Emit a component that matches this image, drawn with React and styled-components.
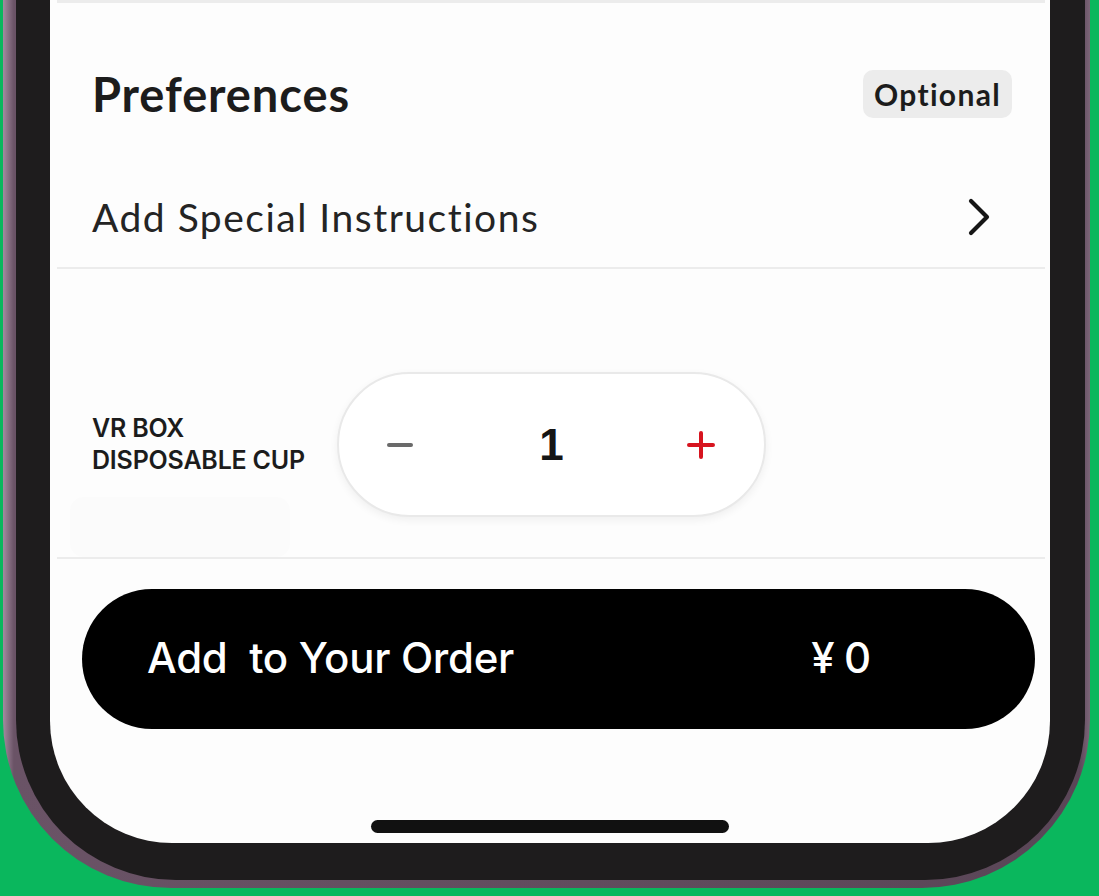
import styled, { createGlobalStyle } from 'styled-components'

const Global = createGlobalStyle`
  html, body { margin: 0; padding: 0; }
  body { background: #0ab75d; }
`

const Page = styled.div`
  width: 1099px;
  height: 896px;
  overflow: hidden;
  padding-left: 3px;
  box-sizing: border-box;
`

const Bezel = styled.div`
  width: 1087px;
  height: 888px;
  box-sizing: border-box;
  padding: 0 5px 8px 13px;
  border-radius: 0 0 168px 168px;
  background: linear-gradient(90deg, #a48ba0 0%, #6a5366 1%, #5a4657 99%, #7d6679 100%);
`

const Frame = styled.div`
  height: 100%;
  box-sizing: border-box;
  padding: 0 35px 37px 34px;
  background: #1e1c1d;
  border-radius: 0 0 160px 160px;
`

const Screen = styled.div`
  height: 100%;
  background: #fdfdfd;
  border-radius: 0 0 122px 122px;
  display: flex;
  flex-direction: column;
  overflow: hidden;
`

const Rule = styled.div`
  height: ${p => p.$h || 2}px;
  margin: ${p => p.$top || 0}px 5px 0 7px;
  background: #ececec;
`

const Header = styled.div`
  margin-top: 67px;
  height: 47px;
  padding: 0 38px 0 42px;
  display: flex;
  align-items: center;
  justify-content: space-between;
`

const Title = styled.h2`
  margin: 0;
  font-family: Lato, "Noto Sans", sans-serif;
  font-weight: 700;
  font-size: 47px;
  color: #1c1c1c;
  letter-spacing: 0.9px;
`

const Tag = styled.span`
  height: 48px;
  width: 149px;
  box-sizing: border-box;
  display: flex;
  align-items: center;
  justify-content: center;
  border-radius: 10px;
  background: #ececec;
  font-family: Lato, "Noto Sans", sans-serif;
  font-weight: 700;
  font-size: 30px;
  color: #1c1c1c;
  letter-spacing: 1.3px;
`

const LinkRow = styled.div`
  margin-top: 74px;
  height: 52px;
  padding: 0 56px 0 42px;
  display: flex;
  align-items: center;
  justify-content: space-between;
  font-family: Lato, "Noto Sans", sans-serif;
  font-size: 39px;
  color: #242424;
  letter-spacing: 1.5px;
`

const ItemRow = styled.div`
  margin-top: 103px;
  height: 145px;
  padding-left: 42px;
  display: flex;
  align-items: center;
`

const ItemName = styled.div`
  width: 245px;
  font-family: Inter, "Noto Sans", sans-serif;
  font-weight: 600;
  font-size: 25px;
  line-height: 32px;
  letter-spacing: -0.2px;
  color: #1c1c1c;
  margin-top: -2px;
`

const Stepper = styled.div`
  width: 429px;
  height: 145px;
  box-sizing: border-box;
  border-radius: 73px;
  border: 2px solid #e9e9e9;
  box-shadow: 0 3px 8px rgba(0, 0, 0, 0.06);
  background: #fff;
  display: flex;
  align-items: center;
  justify-content: space-between;
  padding: 0 48px 0 46px;
`

const StepBtn = styled.span`
  width: 30px;
  height: 30px;
  display: flex;
  align-items: center;
  justify-content: center;
`

const Count = styled.span`
  font-family: "Liberation Sans", Arial, sans-serif;
  font-weight: 700;
  font-size: 44px;
  color: #151515;
  margin-left: 2px;
`

const Ghost = styled.div`
  margin: -20px 0 0 20px;
  width: 220px;
  height: 60px;
  border-radius: 14px;
  background: #fbfbfb;
`

const OrderButton = styled.button`
  margin: 30px 15px 0 32px;
  height: 140px;
  border: none;
  border-radius: 70px;
  background: #000;
  color: #fff;
  display: flex;
  align-items: center;
  justify-content: space-between;
  padding: 0 165px 4px 65px;
  font-family: Inter, "Noto Sans", sans-serif;
  font-weight: 500;
  font-size: 42px;
  letter-spacing: -0.3px;
  white-space: pre;
  cursor: pointer;
`

const Price = styled.span`
  letter-spacing: -1px;
`

const HomeBar = styled.div`
  margin: 91px auto 0;
  width: 358px;
  height: 13px;
  border-radius: 7px;
  background: #111;
`

export default function App() {
  return (
    <Page>
      <Global />
      <Bezel>
        <Frame>
          <Screen>
            <Rule $h={3} $top={0} />
            <Header>
              <Title>Preferences</Title>
              <Tag>Optional</Tag>
            </Header>
            <LinkRow>
              <span>Add Special Instructions</span>
              <svg width="28" height="40" viewBox="0 0 28 40" fill="none">
                <path d="M5 4 L21 20 L5 36" stroke="#161616" strokeWidth="4.2" strokeLinecap="round" strokeLinejoin="round" />
              </svg>
            </LinkRow>
            <Rule $top={24} />
            <ItemRow>
              <ItemName>VR BOX<br />DISPOSABLE CUP</ItemName>
              <Stepper>
                <StepBtn>
                  <svg width="28" height="6" viewBox="0 0 28 6">
                    <rect x="1" y="1" width="26" height="4" rx="2" fill="#6a6a6a" />
                  </svg>
                </StepBtn>
                <Count>1</Count>
                <StepBtn>
                  <svg width="28" height="28" viewBox="0 0 28 28">
                    <path d="M14 2 V26 M2 14 H26" stroke="#d7141f" strokeWidth="4" strokeLinecap="round" />
                  </svg>
                </StepBtn>
              </Stepper>
            </ItemRow>
            <Ghost />
            <Rule $top={0} />
            <OrderButton>
              <span>Add  to Your Order</span>
              <Price>¥ 0</Price>
            </OrderButton>
            <HomeBar />
          </Screen>
        </Frame>
      </Bezel>
    </Page>
  )
}
